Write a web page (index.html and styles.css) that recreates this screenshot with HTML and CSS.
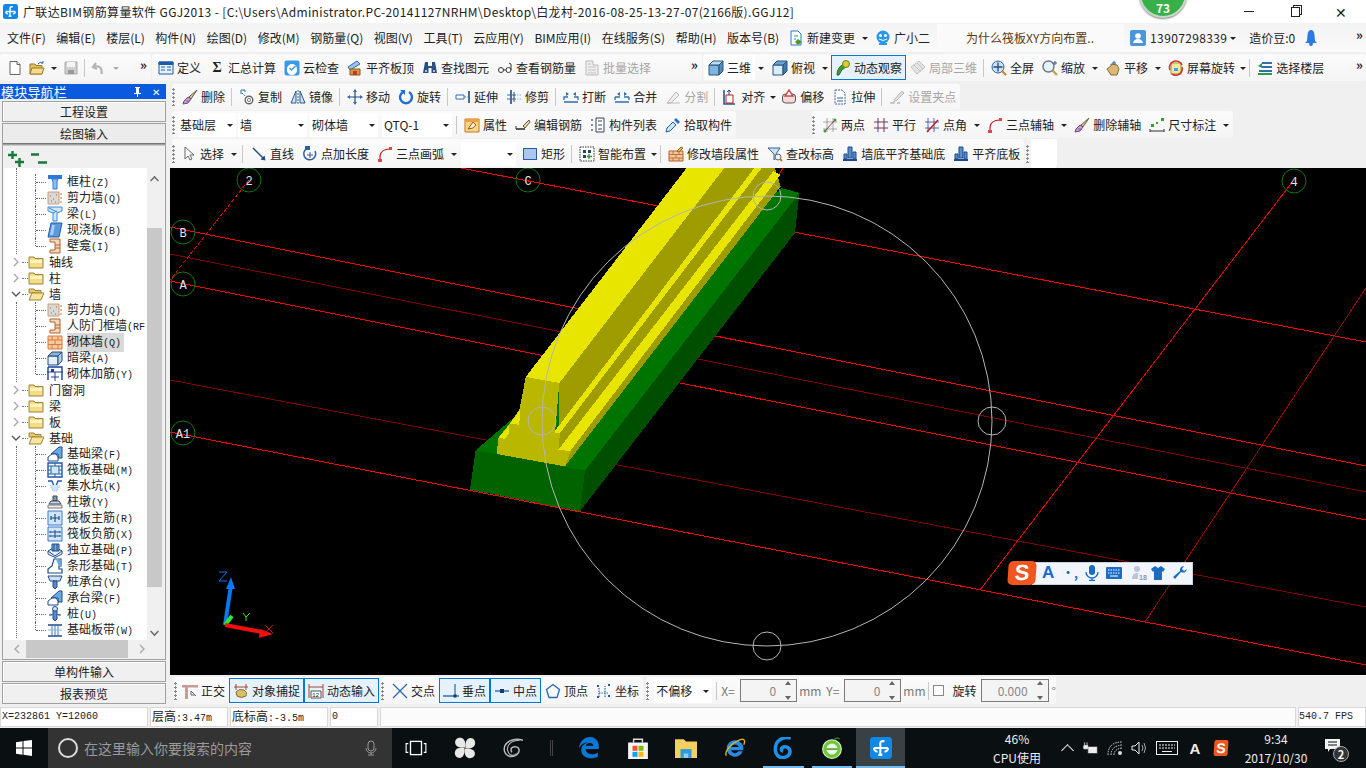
FILE: index.html
```html
<!DOCTYPE html>
<html lang="zh">
<head>
<meta charset="utf-8">
<title>GGJ2013</title>
<link rel="stylesheet" href="styles.css">
</head>
<body>
<svg class="sprite" aria-hidden="true">
<symbol id="app" viewBox="0 0 16 16"><rect width="16" height="16" rx="2.5" fill="#1188e6"/><path d="M10.500 3H9a1.500 1.500 0 0 0-1.500 1.500V13M3 8h10M3 8a2.200 2.200 0 0 0 2.500 2.500M13 8a2.200 2.200 0 0 1-2.500 2.500M6 13h3" fill="none" stroke="#fff" stroke-width="1.500"/></symbol>
<symbol id="file" viewBox="0 0 16 16"><path d="M3 1.500h7l3 3v10H3z" fill="#fff" stroke="#666"/><path d="M10 1.500v3h3" fill="#eee" stroke="#666"/></symbol>
<symbol id="open" viewBox="0 0 16 16"><path d="M1 4h5l1 1.500h6V14H1z" fill="#e2c060" stroke="#9a7a2a"/><path d="M3 8h12l-2 6H1z" fill="#f5dc8a" stroke="#9a7a2a"/><path d="M9 4q2-3 5-1M14 1v2h-2" fill="none" stroke="#2a6fc0"/></symbol>
<symbol id="save" viewBox="0 0 16 16"><path d="M2 2h12v12H2z" fill="#cfcfcf" stroke="#aaa"/><path d="M4 2h8v5H4z" fill="#f4f4f4"/><path d="M5 10h6v4H5z" fill="#999"/></symbol>
<symbol id="undo" viewBox="0 0 16 16"><path d="M5 3 2 7l4 2M2.500 7c5-2 9 0 8 7" fill="none" stroke="#b5b5b5" stroke-width="2.200"/></symbol>
<symbol id="def" viewBox="0 0 16 16"><path d="M1 2h14v12H1z" fill="#e8f0fa" stroke="#1d5aa8"/><path d="M1 2h14v2.500H1zM3 7h4M3 10h4M9 7h4M9 10h4" fill="#1d5aa8" stroke="#1d5aa8"/></symbol>
<symbol id="cloud" viewBox="0 0 16 16"><rect x=".5" y=".5" width="15" height="15" rx="2" fill="#3a9ae8"/><path d="M3 9a5 5 0 1 1 10 0 5 5 0 0 1-10 2z" fill="#fff"/><path d="m5.500 8 2 2 4-4" fill="none" stroke="#3a9ae8" stroke-width="1.500"/></symbol>
<symbol id="house" viewBox="0 0 16 16"><path d="M1 7 10 1l3 3-10 6z" fill="#9fc4e8" stroke="#2a68b0"/><path d="M3 9h10v6H3z" fill="#d69a3a" stroke="#8a5a1a"/><path d="M6 11h4v4H6z" fill="#c0392b"/></symbol>
<symbol id="bino" viewBox="0 0 16 16"><path d="M3 2h3v4h4V2h3l2 11H9.500V8h-3v5H1z" fill="#2c4f80"/><path d="M3 10h2v2H3zM11 10h2v2h-2z" fill="#9fc4e8"/></symbol>
<symbol id="glass" viewBox="0 0 16 16"><circle cx="4" cy="10" r="2.500" fill="#fff" stroke="#333"/><circle cx="11.500" cy="10" r="2.500" fill="#fff" stroke="#333"/><path d="M6.500 10h2.500M14 10V4l-2-1" fill="none" stroke="#333"/></symbol>
<symbol id="batch" viewBox="0 0 16 16"><path d="M2 1h7v4h5v10H2z" fill="#eee" stroke="#bbb"/><path d="M4 4h3M4 7h8M4 10h8M4 13h8" stroke="#c4c4c4"/></symbol>
<symbol id="cube" viewBox="0 0 16 16"><path d="M1 5h10v10H1z" fill="#7fb4dd" stroke="#28557f"/><path d="m1 5 4-4h10l-4 4z" fill="#bcdcf2" stroke="#28557f"/><path d="m11 5 4-4v10l-4 4z" fill="#4d8cbe" stroke="#28557f"/></symbol>
<symbol id="cubet" viewBox="0 0 16 16"><path d="M1 5h10v10H1z" fill="#dcecf8" stroke="#28557f"/><path d="m1 5 4-4h10l-4 4z" fill="#6aa2d0" stroke="#28557f"/><path d="m11 5 4-4v10l-4 4z" fill="#3e79ad" stroke="#28557f"/></symbol>
<symbol id="orbit" viewBox="0 0 16 16"><path d="M2 15q0-8 7-11l2 3q-5 2-7 8z" fill="#3f9a3a" stroke="#256b22"/><circle cx="11" cy="4" r="3.500" fill="#d8d030" stroke="#7d7a14"/></symbol>
<symbol id="lo3d" viewBox="0 0 16 16"><path d="M1 7 9 1l6 6-8 7z" fill="#e5e5e5" stroke="#c0c0c0"/><path d="m4 5 7 7M7 3l6 6" stroke="#c4c4c4"/></symbol>
<symbol id="full" viewBox="0 0 16 16"><circle cx="7" cy="7" r="6" fill="#cfe2f5" stroke="#345f96"/><path d="M7 2.500v9M2.500 7h9" stroke="#234a7c" stroke-width="1.300"/><path d="m11 11 4 4" stroke="#c48a22" stroke-width="2.200"/></symbol>
<symbol id="zoomi" viewBox="0 0 16 16"><circle cx="6.500" cy="6.500" r="5.500" fill="#e8f0f8" stroke="#66788e" stroke-width="1.400"/><path d="m10.500 10.500 4.500 4.500" stroke="#c4a050" stroke-width="2.400"/><path d="M13 1v4M11 3h4" stroke="#345f96"/></symbol>
<symbol id="hand" viewBox="0 0 16 16"><path d="M2 9 6 6V4l6 1 2 4-2 6H6z" fill="#d9b878" stroke="#8a6a30"/><path d="M9 1v4M7 3h4" stroke="#345f96"/></symbol>
<symbol id="rot" viewBox="0 0 16 16"><rect x="3" y="3" width="10" height="11" fill="#f0e8a0" stroke="#8aa040"/><path d="M2 10A6.500 6.500 0 0 1 14 5" fill="none" stroke="#d03a2a" stroke-width="1.600"/><path d="M14 7a6.500 6.500 0 0 1-10 7" fill="none" stroke="#d03a2a" stroke-width="1.600"/><path d="M6 8h4v3H6z" fill="#4a9adf"/></symbol>
<symbol id="layer" viewBox="0 0 16 16"><path d="M5 2h10v2H5zM5 6h10v2H5z" fill="#2f6fb0"/><path d="M2 10h13v2H2z" fill="#2f6fb0"/><path d="M1 13h14v2H1z" fill="#2e9a44"/><path d="M5 3 1 6l4 2z" fill="#2e9a44"/></symbol>
<symbol id="brush" viewBox="0 0 16 16"><path d="M15 1 7 8l2 2z" fill="#d8c8a0" stroke="#6a5a3a"/><path d="M6 8 2 12l-1 3 5-1 3-4z" fill="#cfa0c8" stroke="#6a4a70"/><path d="M4 12h4" stroke="#7a5acc"/></symbol>
<symbol id="copy" viewBox="0 0 16 16"><circle cx="10" cy="11" r="3.800" fill="none" stroke="#666" stroke-width="1.400"/><circle cx="10" cy="11" r="1.600" fill="none" stroke="#888"/><path d="M2 1h4v2M2 1v4" fill="none" stroke="#2f6fb0"/><path d="m3 4 3 3" stroke="#2f6fb0" stroke-dasharray="1.500 1"/></symbol>
<symbol id="mirror" viewBox="0 0 16 16"><path d="M1 14 6 2v12zM15 14 10 2v12z" fill="#cfe0f0" stroke="#2a5a8a"/><path d="M8 1v14" stroke="#2a5a8a" stroke-dasharray="2 1"/></symbol>
<symbol id="move" viewBox="0 0 16 16"><path d="M8 1v14M1 8h14" stroke="#234a7c" stroke-width="1.200"/><path d="M8 0 6 3h4zM8 16l-2-3h4zM0 8l3-2v4zM16 8l-3-2v4z" fill="#2f6fb0"/></symbol>
<symbol id="rotate" viewBox="0 0 16 16"><path d="M11 3a6 6 0 1 1-6 0" fill="none" stroke="#1f6fd0" stroke-width="2.400"/><path d="M2 1h5v5z" fill="#1f6fd0"/></symbol>
<symbol id="extend" viewBox="0 0 16 16"><path d="M1 6h8v4H1z" fill="#fff" stroke="#2f6fb0"/><path d="M9.500 8h3" stroke="#2f6fb0" stroke-dasharray="1.500 1"/><path d="M14 2v12" stroke="#234a7c" stroke-width="1.600"/></symbol>
<symbol id="trim" viewBox="0 0 16 16"><path d="M5 1v14" stroke="#234a7c" stroke-width="1.600"/><path d="M1 6h9M1 10h9" stroke="#2f6fb0"/><path d="M11 6h4M11 10h4" stroke="#8db4dc" stroke-dasharray="1.500 1"/><path d="M8 3v10" stroke="#234a7c"/></symbol>
<symbol id="brk" viewBox="0 0 16 16"><path d="M1 11V8h4M15 11V8h-4M1 13h14" fill="none" stroke="#2f6fb0" stroke-width="1.300"/><path d="m3 3 3 2-3 2zM13 3l-3 2 3 2z" fill="#2f6fb0"/></symbol>
<symbol id="merge" viewBox="0 0 16 16"><path d="M1 8h5M10 8h5M1 13h14M1 11V8M15 11V8" fill="none" stroke="#2f6fb0" stroke-width="1.300"/><path d="m6 3-3 2 3 2zM10 3l3 2-3 2z" fill="#2f6fb0"/></symbol>
<symbol id="split" viewBox="0 0 16 16"><path d="m2 14 9-11 3 3-8 8z" fill="#eee" stroke="#bbb"/><path d="M2 14h13" stroke="#bbb"/></symbol>
<symbol id="align" viewBox="0 0 16 16"><path d="M2 1v14h11" fill="none" stroke="#2a5a8a" stroke-width="1.600"/><path d="M4 6h7v8H4z" fill="#fff" stroke="#c01a1a"/><path d="M7 1v5M5 3l2-2 2 2" fill="none" stroke="#234a7c"/></symbol>
<symbol id="offset" viewBox="0 0 16 16"><rect x="1.500" y="5" width="13" height="9" rx="3" fill="#f6d8d8" stroke="#555"/><path d="m8 1 4 6H4z" fill="#fff" stroke="#c94a4a" stroke-width="1.400"/></symbol>
<symbol id="stretch" viewBox="0 0 16 16"><path d="M3 1h7l3 3v11H3z" fill="#fff" stroke="#345f96" stroke-dasharray="2 1"/><path d="M5 9h6M5 12h6" stroke="#345f96"/></symbol>
<symbol id="gripset" viewBox="0 0 16 16"><path d="m5 11 8-9 2 2-8 8z" fill="#ddd" stroke="#bbb"/><path d="M1 14h4v-2M8 14h3" stroke="#bbb" fill="none" stroke-width="1.500"/></symbol>
<symbol id="prop" viewBox="0 0 16 16"><path d="M1 2h14v13H1z" fill="#f6d58c" stroke="#c07a20"/><path d="M4 12 9 5l3 3-3 3z" fill="#fff3d0" stroke="#a05a10"/><path d="M1 2h14v3H1z" fill="#f0a040"/></symbol>
<symbol id="rebar" viewBox="0 0 16 16"><path d="M1 12h9" stroke="#333" stroke-width="1.600"/><path d="M1 9v3" stroke="#333"/><path d="m8 9 6-6 1 2-5 6z" fill="#e8d8a0" stroke="#6a5a3a"/></symbol>
<symbol id="list" viewBox="0 0 16 16"><path d="M6 1h8v14H6z" fill="#fff" stroke="#345"/><path d="M8 4h4M8 8h4M8 12h4" stroke="#345"/><path d="M1 2h2v2H1zM1 7h2v2H1zM1 12h2v2H1z" fill="#888"/></symbol>
<symbol id="pick" viewBox="0 0 16 16"><path d="m1 15 1-4 6-6 3 3-6 6z" fill="#cfe6f8" stroke="#2060a0"/><path d="m9 3 2-2 4 4-2 2z" fill="#1f6fd0"/></symbol>
<symbol id="twop" viewBox="0 0 16 16"><path d="M1 5h14M1 12h14M5 1v14M11 1v14" stroke="#888" stroke-width=".7"/><path d="m2 15 12-13" stroke="#a03030"/><circle cx="13" cy="3" r="1.500" fill="#3a9a3a"/><circle cx="3" cy="14" r="1.500" fill="#3a9a3a"/></symbol>
<symbol id="para" viewBox="0 0 16 16"><path d="M1 5h14M1 11h14" stroke="#c01a1a"/><path d="M5 1v14M11 1v14" stroke="#2a4a9a"/></symbol>
<symbol id="angle" viewBox="0 0 16 16"><path d="M1 5h14M1 11h14M4 1v14M10 1v14" stroke="#2a4a9a" stroke-width=".8"/><path d="m3 15 11-12" stroke="#c01a1a" stroke-width="1.400"/></symbol>
<symbol id="arc3" viewBox="0 0 16 16"><path d="M3 15V10Q4 3 13 3" fill="none" stroke="#c01a1a" stroke-width="1.200"/><path d="M1 13h4v3H1zM12 1h3v3h-3z" fill="#d84a4a"/></symbol>
<symbol id="dimn" viewBox="0 0 16 16"><path d="M1 12v3M15 12v3M1 14h14" stroke="#333"/><path d="M2 7h3v3H2zM12 1h3v3h-3zM7 5h2v2H7z" fill="#3a9a3a"/></symbol>
<symbol id="cursor" viewBox="0 0 16 16"><path d="M4 1v12l3-3 2 4 2-1-2-4h4z" fill="#fff" stroke="#666"/></symbol>
<symbol id="line" viewBox="0 0 16 16"><path d="m2 2 11 11" stroke="#234a7c" stroke-width="1.400"/><path d="m14.500 14.500-1-5-4 4z" fill="#234a7c"/></symbol>
<symbol id="plen" viewBox="0 0 16 16"><path d="M5 2.500A6 6 0 1 0 13 5" fill="none" stroke="#345f96" stroke-width="1.500"/><path d="M8 6v6M5 9h6" stroke="#345f96"/><path d="M3 0h5v4H3z" fill="#345f96"/></symbol>
<symbol id="rect" viewBox="0 0 16 16"><rect x="1.500" y="2.500" width="13" height="11" fill="#aac8ee" stroke="#2a5aa8"/></symbol>
<symbol id="smart" viewBox="0 0 16 16"><path d="M1 1h14v14H1z" fill="#fff" stroke="#333" stroke-dasharray="1.500 1"/><path d="M4 4h3v3H4zM9 4h3v3H9zM4 9h3v3H4z" fill="#246"/><path d="M10 8v5M8 10.500h5" stroke="#2e9a44" stroke-width="1.400"/></symbol>
<symbol id="brick" viewBox="0 0 16 16"><path d="M1 5h14v10H1z" fill="#f2c69a" stroke="#b8602a"/><path d="M1 8.500h14M1 12h14M5 5v3.500M11 5v3.500M8 8.500V12M5 12v3M11 12v3" stroke="#b8602a" stroke-width=".8"/><path d="m9 5 4-4 2 1-4 4z" fill="#e0c060" stroke="#8a6a20"/></symbol>
<symbol id="elev" viewBox="0 0 16 16"><path d="M1 2h12L9 8v4l-2 2V8z" fill="#cfe0f0" stroke="#345f96"/><circle cx="11" cy="11" r="3" fill="#e8f0f8" stroke="#666"/><path d="m13 13 2 2" stroke="#c47a22" stroke-width="2"/></symbol>
<symbol id="walign" viewBox="0 0 16 16"><path d="M6 1h4v11H6zM2 8h3v5H2zM11 6h3v7h-3z" fill="#5a8ec8" stroke="#1d4a8a"/><path d="M1 14h14" stroke="#1d4a8a" stroke-width="2"/></symbol>
<symbol id="ortho" viewBox="0 0 16 16"><path d="M0 2h16v2.500H0zM3 4h3v12H3z" fill="#c89a9a"/><path d="m9 8 5 5M9 8v4h4" stroke="#667" fill="#fff"/></symbol>
<symbol id="snap" viewBox="0 0 16 16"><path d="M3 1v6M13 1v6M1 4h14" stroke="#a04a30"/><path d="M3 9q3-4 8-2 4 2 2 6-5 3-9 0z" fill="#d8c068" stroke="#8a7030"/></symbol>
<symbol id="cross" viewBox="0 0 16 16"><path d="m1 1 14 14M15 1 1 15" stroke="#2a68b0" stroke-width="1.300"/></symbol>
<symbol id="perp" viewBox="0 0 16 16"><path d="M12 1v13" stroke="#2a68b0" stroke-width="1.200"/><path d="M0 13h16" stroke="#2a68b0" stroke-width="1.400"/><rect x="10.500" y="11.500" width="3" height="3" fill="#123a7c"/></symbol>
<symbol id="mid" viewBox="0 0 16 16"><path d="M1 8h14" stroke="#2a68b0" stroke-width="1.400"/><rect x="6" y="6" width="4" height="4" fill="#123a7c"/></symbol>
<symbol id="penta" viewBox="0 0 16 16"><path d="m8 1.500 6.500 5-2.500 8H4l-2.500-8z" fill="none" stroke="#2a68b0" stroke-width="1.300"/></symbol>
<symbol id="coord" viewBox="0 0 16 16"><path d="M3 14V5M3 10h10M9 14V3" stroke="#2a68b0" stroke-dasharray="1.500 1" stroke-width="1.200"/><path d="M1 2h2v2H1zM12 1h2v2h-2zM1 13h2v2H1zM12 12h2v2h-2z" fill="#1d5aa8"/></symbol>
<symbol id="folder" viewBox="0 0 16 16"><path d="M1 3h5l1 1.500h8V14H1z" fill="#f6dc82" stroke="#9a8440"/><path d="M2 6h12v3H2z" fill="#fff3c0"/></symbol>
<symbol id="fopen" viewBox="0 0 16 16"><path d="M1 3h5l1 1.500h6V7H1z" fill="#e9c868" stroke="#9a8440"/><path d="M4 7h12l-3 7H1z" fill="#fbe39a" stroke="#9a8440"/></symbol>
<symbol id="t-col" viewBox="0 0 16 16"><path d="M1 1h14v4H1z" fill="#2f7ad8"/><path d="M5 5h6l-1 3v7H6V8z" fill="#8cc0ee" stroke="#2f7ad8"/></symbol>
<symbol id="t-wall" viewBox="0 0 16 16"><path d="M1 2h11v12H1z" fill="#d8d8d8" stroke="#d09a70"/><path d="M3 6h1M6 9h1M9 5h1M4 11h1M8 12h1" stroke="#777"/><path d="M13 4h2M13 8h2M13 12h2" stroke="#d06a1a"/></symbol>
<symbol id="t-beam" viewBox="0 0 16 16"><path d="M1 1h14v4l-5 2v8H6V7L1 5z" fill="#cfe6f8" stroke="#3a8ad8"/><path d="m2 2 8 4M6 7l4-2" stroke="#3a8ad8"/></symbol>
<symbol id="t-slab" viewBox="0 0 16 16"><path d="M4 1h11l-3 14H1z" fill="#5a9ae0" stroke="#1d5aa8"/><path d="m5 3-2 10h3l2-10z" fill="#a8d0f4"/></symbol>
<symbol id="t-niche" viewBox="0 0 16 16"><path d="M3 1h10v14H3v-3h5V4H3z" fill="#f2d8c0" stroke="#b8602a"/><path d="M8 7h5M8 10h5" stroke="#b8602a"/></symbol>
<symbol id="t-brick" viewBox="0 0 16 16"><path d="M1 2h14v13H1z" fill="#f4c8a0" stroke="#d87a3a"/><path d="M1 6h14M1 10.500h14M5 2v4M11 2v4M8 6v4.500M5 10.500V15M11 10.500V15" stroke="#d87a3a"/></symbol>
<symbol id="t-dark" viewBox="0 0 16 16"><path d="M1 6h10v9H1z" fill="#e6eef6" stroke="#234a7c"/><path d="m1 6 4-4h10l-4 4z" fill="#8cb4dc" stroke="#234a7c"/><path d="m11 6 4-4v9l-4 4z" fill="#b4d0ec" stroke="#234a7c"/></symbol>
<symbol id="t-reb" viewBox="0 0 16 16"><path d="M1 1h14v13M1 1v13" fill="none" stroke="#1d3f9a" stroke-width="1.400"/><path d="M0 6h16M8 6v9M4 11h8" stroke="#1d3f9a"/><path d="M4 3h3v3H4z" fill="#1d3f9a"/></symbol>
<symbol id="t-fb" viewBox="0 0 16 16"><path d="m4 8 8-7h3v11h-4V8z" fill="#6aa8e4" stroke="#1d4a8a"/><path d="M1 15V11l4-3h4l2 3v4z" fill="#fff" stroke="#1d4a8a"/></symbol>
<symbol id="t-raft" viewBox="0 0 16 16"><path d="M1 1h14v14H1z" fill="#fff" stroke="#1d5aa8" stroke-width="1.400"/><path d="M4 4h8v8H4z" fill="#cfe6f8" stroke="#1d5aa8"/><path d="M1 4h3M1 8h3M1 12h3M12 4h3M12 8h3M12 12h3M8 1v3M8 12v3" stroke="#1d5aa8"/></symbol>
<symbol id="t-pit" viewBox="0 0 16 16"><path d="M1 3h4l2 5h2l2-5h4" fill="none" stroke="#1d5aa8" stroke-width="1.400"/><path d="m3 7 3 6h4l3-6" fill="#cfe6f8" stroke="#8cb4dc" stroke-dasharray="1 1"/></symbol>
<symbol id="t-pier" viewBox="0 0 16 16"><path d="M6 2h4v5H6z" fill="#7a9ac0" stroke="#345"/><path d="m4 7h8l2 3H2z" fill="#cfd8e4" stroke="#345"/><path d="M1 11h14v3H1z" fill="#eee" stroke="#777"/></symbol>
<symbol id="t-rm" viewBox="0 0 16 16"><path d="M1 1h14v14H1z" fill="#cfe6f8" stroke="#3a78c8"/><path d="M8 4v8M4 8h8M4 6v4M12 6v4" stroke="#1d4a8a" stroke-width="1.200"/></symbol>
<symbol id="t-rn" viewBox="0 0 16 16"><path d="M1 1h14v14H1z" fill="#cfe6f8" stroke="#3a78c8"/><path d="M3 6h10M3 10h10M8 4v8M3 5v2M13 5v2M3 9v2M13 9v2" stroke="#1d4a8a"/></symbol>
<symbol id="t-iso" viewBox="0 0 16 16"><path d="m1 9 7-4 7 4-7 5z" fill="#e8f0f8" stroke="#1d4a8a"/><path d="M1 9v3l7 3.500L15 12V9" fill="none" stroke="#1d4a8a"/><path d="M5 2h7v7H5z" fill="#7aa8dc" stroke="#1d4a8a"/><path d="M7 2v7M10 2v7" stroke="#1d4a8a"/></symbol>
<symbol id="t-strip" viewBox="0 0 16 16"><path d="M7 1h7v7h-2v3h3v4H1v-4l4-3z" fill="#fff" stroke="#1d4a8a" stroke-width="1.200"/><path d="m9 1 5 1v6h-2L10 4z" fill="#6aa8e4"/></symbol>
<symbol id="t-cap" viewBox="0 0 16 16"><path d="M1 2h14l-2 5H3z" fill="#cfe0f0" stroke="#1d4a8a"/><path d="M6 7h4v6l-2 2-2-2z" fill="#5a8ec8" stroke="#1d4a8a"/></symbol>
<symbol id="t-pile" viewBox="0 0 16 16"><circle cx="8" cy="3" r="2.500" fill="#cfe6f8" stroke="#1d4a8a"/><path d="M6 5h4v8l-2 2-2-2zM2 9h3v-1M14 9h-3v-1" fill="#5a8ec8" stroke="#1d4a8a"/></symbol>
<symbol id="t-band" viewBox="0 0 16 16"><path d="M1 3h14M1 14h14" stroke="#1d4a8a" stroke-width="1.300"/><path d="M5 3v11M8 3v11M11 3v11" stroke="#3a78c8"/><path d="M1 8h14" stroke="#8cb4dc"/></symbol>
<symbol id="plus" viewBox="0 0 16 16"><path d="M0 4h9M4.500 0v8M7 11h9M11.500 7v9" stroke="#157a3c" stroke-width="2.400"/></symbol>
<symbol id="minus" viewBox="0 0 16 16"><path d="M0 3.500h8M7 11.500h9" stroke="#157a3c" stroke-width="2.400"/></symbol>
<symbol id="chev" viewBox="0 0 10 10"><path d="m3 1 4 4-4 4" fill="none" stroke="#a8a8a8" stroke-width="1.400"/></symbol>
<symbol id="chevd" viewBox="0 0 10 10"><path d="m1 3 4 4 4-4" fill="none" stroke="#555" stroke-width="1.400"/></symbol>
<symbol id="pin" viewBox="0 0 10 10"><path d="M3 0h5v1H7v5h2v1H6v3H5V7H2V6h2V1H3z" fill="#fff"/></symbol>
<symbol id="change" viewBox="0 0 16 16"><path d="M3 1h7l3 3v11H3z" fill="#fff" stroke="#2a7ac8"/><path d="M6 6h4M6 9h2" stroke="#2a7ac8"/><path d="m10 9 4 3-4 3-3-3z" fill="#4a9a2a"/></symbol>
<symbol id="robot" viewBox="0 0 16 16"><circle cx="8" cy="7" r="6.500" fill="#2a98ea"/><circle cx="5.500" cy="5.500" r="1.500" fill="#fff"/><circle cx="10.500" cy="5.500" r="1.500" fill="#fff"/><path d="M4 9q4 3 8 0" fill="none" stroke="#fff"/><path d="M4 13h8v2H4z" fill="#2a98ea"/></symbol>
<symbol id="user" viewBox="0 0 16 16"><rect width="16" height="16" rx="2" fill="#4a96dc"/><circle cx="8" cy="6" r="2.800" fill="#fff"/><path d="M3 13q1-4 5-4t5 4z" fill="#fff"/></symbol>
<symbol id="bell" viewBox="0 0 16 16"><path d="M8 0q3 0 3.500 5l.5 6 2 2H2l2-2 .5-6Q5 0 8 0z" fill="#2a7ae0"/><circle cx="8" cy="14" r="2" fill="#2a7ae0"/></symbol>
<symbol id="win" viewBox="0 0 16 16"><path d="m0 2.300 6.500-1v6.200H0zM7.500 1.100 16 0v7.500H7.500zM0 8.500h6.500v6.200l-6.500-1zM7.500 8.500H16V16l-8.500-1.200z" fill="#fff"/></symbol>
<symbol id="mic" viewBox="0 0 16 16"><rect x="5" y="1" width="6" height="10" rx="3" fill="none" stroke="#999"/><path d="M3 8a5 5 0 0 0 10 0M8 13v2M5 15h6" fill="none" stroke="#999"/></symbol>
<symbol id="tview" viewBox="0 0 20 16"><rect x="5" y="2" width="10" height="12" fill="none" stroke="#fff" stroke-width="1.200"/><path d="M3 4H1v8h2M17 4h2v8h-2" fill="none" stroke="#fff"/></symbol>
<symbol id="fan" viewBox="0 0 20 20"><g fill="#e8e8e8"><path id="petal" d="M10 9.500C6 10 1 9 1 5c0-3 3-5 6-4 3 1 4 5 3 8.500z"/><path d="M10.500 10C10 6 11 1 15 1c3 0 5 3 4 6-1 3-5 4-8.500 3z"/><path d="M10 10.500c4-.5 9 .5 9 4.500 0 3-3 5-6 4-3-1-4-5-3-8.500z"/><path d="M9.500 10c.5 4-.5 9-4.500 9-3 0-5-3-4-6 1-3 5-4 8.500-3z"/></g></symbol>
<symbol id="swirl" viewBox="0 0 20 20"><path d="M19 3C10 0 2 5 2 11s6 8 10 6 5-7 1-8-6 2-4 5" fill="none" stroke="#bbb" stroke-width="1.300"/><path d="M16 3C9 3 4 7 5 12s6 6 8 3" fill="none" stroke="#bbb"/></symbol>
<symbol id="edge" viewBox="0 0 20 20"><path d="M1 11C1 4 6 0 11 0c5 0 8 4 8 9v2H7c0 5 7 6 11 3v4c-6 3-15 1-15-6 0-4 3-6 6-7-4 0-7 2-8 6z" fill="#0a78d7"/><path d="M7 8h7c0-3-6-4-7 0z" fill="#0a0f12"/></symbol>
<symbol id="store" viewBox="0 0 20 20"><path d="M1 5h18v15H1z" fill="#f4f4f4"/><path d="M6 5V2h8v3" fill="none" stroke="#ddd" stroke-width="1.300"/><path d="M5 8h4.500v4.500H5z" fill="#f25022"/><path d="M10.500 8H15v4.500h-4.500z" fill="#7fba00"/><path d="M5 13.500h4.500V18H5z" fill="#00a4ef"/><path d="M10.500 13.500H15V18h-4.500z" fill="#ffb900"/></symbol>
<symbol id="expl" viewBox="0 0 20 20"><path d="M0 2h8l2 2h10v15H0z" fill="#f4cf5e"/><path d="M5 11h10v8H5z" fill="#2f9ae0"/><path d="M8 15h4v4H8z" fill="#8fd0f4"/></symbol>
<symbol id="ie" viewBox="0 0 20 20"><path d="M10 3a7.500 7.500 0 1 0 7 10h-4a3.500 3.500 0 0 1-6.500-1H17.500A7.500 7.500 0 0 0 10 3zM6.500 9c.5-3 6-3 7 0z" fill="#2a8ae0"/><path d="M2 17C0 12 10 3 17 2c2 0 2 3 1 5" fill="none" stroke="#e8b820" stroke-width="1.200"/></symbol>
<symbol id="gapp" viewBox="0 0 20 20"><path d="M17 1c-8-2-14 3-14 10s6 9 10 7 5-7 0-9c-4-1-6 3-3 4" fill="none" stroke="#1f90e8" stroke-width="3.200"/></symbol>
<symbol id="green" viewBox="0 0 20 20"><circle cx="10" cy="11" r="8.500" fill="#6cc83a" stroke="#d8f0c8"/><circle cx="10" cy="11" r="5" fill="#eef8e0"/><path d="M5 11h10" stroke="#4a9a2a" stroke-width="1.400"/><path d="M12 2q3-2 5 0" fill="none" stroke="#3a8a1a"/></symbol>
<symbol id="plug" viewBox="0 0 20 16"><path d="M6 6h12v9H6z" fill="#eee" stroke="#222"/><path d="M2 1v4M5 1v4M1 5h5v4H1z" stroke="#eee" fill="#eee"/></symbol>
<symbol id="wifi" viewBox="0 0 16 16"><path d="M1 15q0-13 14-13M4 15q0-9 11-10M7 15q0-6 8-7" fill="none" stroke="#ddd" stroke-dasharray="1.500 1"/><circle cx="13" cy="13" r="2" fill="#ddd"/></symbol>
<symbol id="sound" viewBox="0 0 16 16"><path d="M1 6h3l4-4v12l-4-4H1z" fill="none" stroke="#eee"/><path d="M11 5q2 3 0 6M13 3q3 5 0 10" fill="none" stroke="#aaa"/></symbol>
<symbol id="kbd" viewBox="0 0 22 16"><rect x=".5" y="1.500" width="21" height="13" fill="none" stroke="#eee"/><path d="M3 5h16M3 8h16" stroke="#eee" stroke-dasharray="2 1"/><path d="M6 11.500h10" stroke="#eee"/></symbol>
<symbol id="msg" viewBox="0 0 16 16"><path d="M0 1h15v10H5l-2 3v-3H0z" fill="#f4f4f4"/><path d="M3 4h9M3 7h9" stroke="#0a0f12"/></symbol>
<symbol id="shirt" viewBox="0 0 16 16"><path d="M5 1 1 4l2 3 1-1v9h8V6l1 1 2-3-4-3-3 2z" fill="#1a6cc4"/></symbol>
<symbol id="wrench" viewBox="0 0 16 16"><path d="M15 4a4 4 0 0 1-6 3l-6 7-2-2 7-6a4 4 0 0 1 4-5l-2 3 2 2z" fill="#1a6cc4"/></symbol>
<symbol id="smic" viewBox="0 0 16 16"><rect x="5" y="0" width="6" height="10" rx="3" fill="#1a6cc4"/><path d="M2 7a6 6 0 0 0 12 0M8 13v2M5 15.500h6" fill="none" stroke="#1a6cc4" stroke-width="1.300"/></symbol>
<symbol id="skbd" viewBox="0 0 16 16"><rect y="2" width="16" height="12" rx="1" fill="#1a6cc4"/><path d="M2 5h12M2 8h12" stroke="#fff" stroke-dasharray="1.500 1"/><path d="M4 11h8" stroke="#fff"/></symbol>
<symbol id="sperson" viewBox="0 0 16 16"><circle cx="6" cy="4" r="3" fill="#bcc6d4"/><path d="M1 14q0-6 5-6t5 6z" fill="#bcc6d4"/></symbol>
</svg>

<header class="titlebar">
  <svg class="appicon"><use href="#app"/></svg>
  <span class="title">广联达BIM钢筋算量软件 GGJ2013 - [C:\Users\Administrator.PC-20141127NRHM\Desktop\白龙村-2016-08-25-13-27-07(2166版).GGJ12]</span>
  <div class="winbtns">
    <span class="wb"><i class="w-min"></i></span>
    <span class="wb"><i class="w-max"></i></span>
    <span class="wb"><i class="w-close">✕</i></span>
  </div>
</header>
<div class="badge"><span>73</span></div>

<nav class="menubar">
  <div class="menus">
    <span>文件(F)</span><span>编辑(E)</span><span>楼层(L)</span><span>构件(N)</span><span>绘图(D)</span><span>修改(M)</span><span>钢筋量(Q)</span><span>视图(V)</span><span>工具(T)</span><span>云应用(Y)</span><span>BIM应用(I)</span><span>在线服务(S)</span><span>帮助(H)</span><span>版本号(B)</span>
  </div>
  <div class="it ml5"><svg class="ic"><use href="#change"/></svg><span>新建变更</span></div><i class="arr"></i>
  <div class="it"><svg class="ic"><use href="#robot"/></svg><span>广小二</span></div>
  <div class="news">为什么筏板XY方向布置..</div>
  <div class="userbox">
    <svg class="ic"><use href="#user"/></svg><span class="phone">13907298339</span><i class="arr"></i>
    <span class="beans">造价豆:0</span><svg class="ic bell"><use href="#bell"/></svg><b class="more mr">»</b>
  </div>
</nav>

<div class="row rowtop">
  <div class="blk b-file">
    <span class="ib"><svg class="ic"><use href="#file"/></svg></span>
    <span class="ib"><svg class="ic"><use href="#open"/></svg></span><i class="arr"></i>
    <span class="ib"><svg class="ic"><use href="#save"/></svg></span><i class="sep"></i>
    <span class="ib"><svg class="ic"><use href="#undo"/></svg></span><i class="arr dim"></i>
    <b class="more">»</b>
  </div>
  <div class="blk b-calc">
    <div class="it"><svg class="ic"><use href="#def"/></svg><span>定义</span></div>
    <div class="it"><b class="sigma">Σ</b><span>汇总计算</span></div>
    <div class="it"><svg class="ic"><use href="#cloud"/></svg><span>云检查</span></div>
    <div class="it"><svg class="ic"><use href="#house"/></svg><span>平齐板顶</span></div>
    <div class="it"><svg class="ic"><use href="#bino"/></svg><span>查找图元</span></div>
    <div class="it"><svg class="ic"><use href="#glass"/></svg><span>查看钢筋量</span></div>
    <div class="it off"><svg class="ic"><use href="#batch"/></svg><span>批量选择</span></div>
    <b class="more">»</b>
  </div>
  <div class="blk b-view">
    <div class="it wh"><svg class="ic"><use href="#cube"/></svg><span>三维</span></div><i class="arr a13"></i>
    <div class="it"><svg class="ic"><use href="#cubet"/></svg><span>俯视</span></div><i class="arr"></i>
    <div class="it act"><svg class="ic"><use href="#orbit"/></svg><span>动态观察</span></div>
    <div class="it off"><svg class="ic"><use href="#lo3d"/></svg><span>局部三维</span></div><i class="sep"></i>
    <div class="it"><svg class="ic"><use href="#full"/></svg><span>全屏</span></div>
    <div class="it"><svg class="ic"><use href="#zoomi"/></svg><span>缩放</span></div><i class="arr"></i>
    <div class="it"><svg class="ic"><use href="#hand"/></svg><span>平移</span></div><i class="arr"></i>
    <div class="it"><svg class="ic"><use href="#rot"/></svg><span>屏幕旋转</span></div><i class="arr a8"></i><i class="sep"></i>
    <div class="it"><svg class="ic"><use href="#layer"/></svg><span>选择楼层</span></div>
    <b class="more mr">»</b>
  </div>
</div>

<main class="work">
  <aside class="nav">
    <div class="navhead"><span>模块导航栏</span><svg class="pin"><use href="#pin"/></svg><span class="navx">✕</span></div>
    <button class="navbtn">工程设置</button>
    <button class="navbtn on">绘图输入</button>
    <div class="panel">
      <div class="strip"><svg class="ic"><use href="#plus"/></svg><svg class="ic wide"><use href="#minus"/></svg></div>
      <div class="treewrap">
        <div class="tree">
          <div class="group first">
            <div class="leaf"><svg class="ic"><use href="#t-col"/></svg><span>框柱<span class="m">(Z)</span></span></div>
            <div class="leaf"><svg class="ic"><use href="#t-wall"/></svg><span>剪力墙<span class="m">(Q)</span></span></div>
            <div class="leaf"><svg class="ic"><use href="#t-beam"/></svg><span>梁<span class="m">(L)</span></span></div>
            <div class="leaf"><svg class="ic"><use href="#t-slab"/></svg><span>现浇板<span class="m">(B)</span></span></div>
            <div class="leaf"><svg class="ic"><use href="#t-niche"/></svg><span>壁龛<span class="m">(I)</span></span></div>
          </div>
          <div class="node"><svg class="cv"><use href="#chev"/></svg><svg class="ic"><use href="#folder"/></svg><span>轴线</span></div>
          <div class="node"><svg class="cv"><use href="#chev"/></svg><svg class="ic"><use href="#folder"/></svg><span>柱</span></div>
          <div class="node"><svg class="cv"><use href="#chevd"/></svg><svg class="ic"><use href="#fopen"/></svg><span>墙</span></div>
          <div class="group">
            <div class="leaf"><svg class="ic"><use href="#t-wall"/></svg><span>剪力墙<span class="m">(Q)</span></span></div>
            <div class="leaf"><svg class="ic"><use href="#t-niche"/></svg><span>人防门框墙<span class="m">(RF</span></span></div>
            <div class="leaf sel"><svg class="ic"><use href="#t-brick"/></svg><span>砌体墙<span class="m">(Q)</span></span></div>
            <div class="leaf"><svg class="ic"><use href="#t-dark"/></svg><span>暗梁<span class="m">(A)</span></span></div>
            <div class="leaf"><svg class="ic"><use href="#t-reb"/></svg><span>砌体加筋<span class="m">(Y)</span></span></div>
          </div>
          <div class="node"><svg class="cv"><use href="#chev"/></svg><svg class="ic"><use href="#folder"/></svg><span>门窗洞</span></div>
          <div class="node"><svg class="cv"><use href="#chev"/></svg><svg class="ic"><use href="#folder"/></svg><span>梁</span></div>
          <div class="node"><svg class="cv"><use href="#chev"/></svg><svg class="ic"><use href="#folder"/></svg><span>板</span></div>
          <div class="node"><svg class="cv"><use href="#chevd"/></svg><svg class="ic"><use href="#fopen"/></svg><span>基础</span></div>
          <div class="group">
            <div class="leaf"><svg class="ic"><use href="#t-fb"/></svg><span>基础梁<span class="m">(F)</span></span></div>
            <div class="leaf"><svg class="ic"><use href="#t-raft"/></svg><span>筏板基础<span class="m">(M)</span></span></div>
            <div class="leaf"><svg class="ic"><use href="#t-pit"/></svg><span>集水坑<span class="m">(K)</span></span></div>
            <div class="leaf"><svg class="ic"><use href="#t-pier"/></svg><span>柱墩<span class="m">(Y)</span></span></div>
            <div class="leaf"><svg class="ic"><use href="#t-rm"/></svg><span>筏板主筋<span class="m">(R)</span></span></div>
            <div class="leaf"><svg class="ic"><use href="#t-rn"/></svg><span>筏板负筋<span class="m">(X)</span></span></div>
            <div class="leaf"><svg class="ic"><use href="#t-iso"/></svg><span>独立基础<span class="m">(P)</span></span></div>
            <div class="leaf"><svg class="ic"><use href="#t-strip"/></svg><span>条形基础<span class="m">(T)</span></span></div>
            <div class="leaf"><svg class="ic"><use href="#t-cap"/></svg><span>桩承台<span class="m">(V)</span></span></div>
            <div class="leaf"><svg class="ic"><use href="#t-fb"/></svg><span>承台梁<span class="m">(F)</span></span></div>
            <div class="leaf"><svg class="ic"><use href="#t-pile"/></svg><span>桩<span class="m">(U)</span></span></div>
            <div class="leaf"><svg class="ic"><use href="#t-band"/></svg><span>基础板带<span class="m">(W)</span></span></div>
          </div>
          <div class="node"><svg class="cv"><use href="#chev"/></svg><svg class="ic"><use href="#folder"/></svg></div>
        </div>
        <div class="vscroll"><i class="up"></i><div class="vthumb"></div><i class="down"></i></div>
      </div>
      <div class="hscroll"><svg class="cv"><use href="#chev"/></svg><div class="hthumb"></div><svg class="cv"><use href="#chev"/></svg></div>
    </div>
    <button class="navbtn low">单构件输入</button>
    <button class="navbtn low">报表预览</button>
  </aside>

  <section class="right">
    <div class="row r2 ra">
      <div class="blk">
        <i class="grip"></i>
        <div class="it"><svg class="ic"><use href="#brush"/></svg><span>删除</span></div><i class="sep"></i>
        <div class="it"><svg class="ic"><use href="#copy"/></svg><span>复制</span></div>
        <div class="it"><svg class="ic"><use href="#mirror"/></svg><span>镜像</span></div><i class="sep"></i>
        <div class="it"><svg class="ic"><use href="#move"/></svg><span>移动</span></div>
        <div class="it"><svg class="ic"><use href="#rotate"/></svg><span>旋转</span></div><i class="sep"></i>
        <div class="it"><svg class="ic"><use href="#extend"/></svg><span>延伸</span></div>
        <div class="it"><svg class="ic"><use href="#trim"/></svg><span>修剪</span></div><i class="sep"></i>
        <div class="it"><svg class="ic"><use href="#brk"/></svg><span>打断</span></div>
        <div class="it"><svg class="ic"><use href="#merge"/></svg><span>合并</span></div>
        <div class="it off"><svg class="ic"><use href="#split"/></svg><span>分割</span></div><i class="sep"></i>
        <div class="it"><svg class="ic"><use href="#align"/></svg><span>对齐</span></div><i class="arr a8"></i>
        <div class="it"><svg class="ic"><use href="#offset"/></svg><span>偏移</span></div>
        <div class="it"><svg class="ic"><use href="#stretch"/></svg><span>拉伸</span></div><i class="sep"></i>
        <div class="it off"><svg class="ic"><use href="#gripset"/></svg><span>设置夹点</span></div>
      </div>
    </div>
    <div class="row r2">
      <div class="blk">
        <i class="grip"></i>
        <div class="combo c58"><span>基础层</span><i class="arr"></i></div>
        <div class="combo c69"><span>墙</span><i class="arr"></i></div>
        <div class="combo c68"><span>砌体墙</span><i class="arr"></i></div>
        <div class="combo c70"><span>QTQ-1</span><i class="arr"></i></div><i class="sep"></i>
        <div class="it"><svg class="ic"><use href="#prop"/></svg><span>属性</span></div>
        <div class="it"><svg class="ic"><use href="#rebar"/></svg><span>编辑钢筋</span></div>
        <div class="it"><svg class="ic"><use href="#list"/></svg><span>构件列表</span></div>
        <div class="it"><svg class="ic"><use href="#pick"/></svg><span>拾取构件</span></div>
      </div>
      <div class="blk b-axis">
        <i class="grip"></i>
        <div class="it"><svg class="ic"><use href="#twop"/></svg><span>两点</span></div>
        <div class="it"><svg class="ic"><use href="#para"/></svg><span>平行</span></div>
        <div class="it"><svg class="ic"><use href="#angle"/></svg><span>点角</span></div><i class="arr"></i>
        <div class="it"><svg class="ic"><use href="#arc3"/></svg><span>三点辅轴</span></div><i class="arr"></i>
        <div class="it"><svg class="ic"><use href="#brush"/></svg><span>删除辅轴</span></div>
        <div class="it"><svg class="ic"><use href="#dimn"/></svg><span>尺寸标注</span></div><i class="arr"></i>
      </div>
    </div>
    <div class="row r2 r4">
      <div class="blk">
        <i class="grip g5"></i>
        <div class="it"><svg class="ic"><use href="#cursor"/></svg><span>选择</span></div><i class="arr"></i><i class="sep s7"></i>
        <div class="it"><svg class="ic"><use href="#line"/></svg><span>直线</span></div>
        <div class="it"><svg class="ic"><use href="#plen"/></svg><span>点加长度</span></div>
        <div class="it"><svg class="ic"><use href="#arc3"/></svg><span>三点画弧</span></div><i class="arr a13"></i>
        <div class="combo c55"><span></span><i class="arr"></i></div><i class="gap2"></i>
        <div class="it"><svg class="ic"><use href="#rect"/></svg><span>矩形</span></div><i class="sep"></i>
        <div class="it"><svg class="ic"><use href="#smart"/></svg><span>智能布置</span></div><i class="arr a8"></i><i class="sep"></i>
        <div class="it"><svg class="ic"><use href="#brick"/></svg><span>修改墙段属性</span></div>
        <div class="it"><svg class="ic"><use href="#elev"/></svg><span>查改标高</span></div>
        <div class="it"><svg class="ic"><use href="#walign"/></svg><span>墙底平齐基础底</span></div>
        <div class="it"><svg class="ic"><use href="#walign"/></svg><span>平齐底板</span></div>
      </div>
      <div class="blk b-tail"><i class="grip"></i></div>
    </div>

    <div class="canvas">
      <svg class="scene" viewBox="170 168 1196 507" xmlns="http://www.w3.org/2000/svg">
        <rect x="170" y="168" width="1196" height="507" fill="#000"/>
        <g class="ln">
          <path d="M440 164 1366 342M170 227 1366 466M170 281 1366 520M170 432 1366 665" stroke="#f00"/>
          <path d="M170 254 1366 492M170 380 1366 607" stroke="#800000"/>
          <path d="M1293 181 980 590" stroke="#e00000"/>
          <path d="M1366 288 1145 622" stroke="#a00000"/>
          <path d="M249 180 170 280" stroke="#e00000" stroke-dasharray="4 2"/>
          <path d="M783 168 778 176" stroke="#e00000"/>
        </g>
        <g class="beam" transform="translate(460 168) scale(.33333)">
          <path d="M47 847 965 60 1018 75 375 908z" fill="#007400"/>
          <path d="M47 847 375 908 360 1030 30 965z" fill="#006300"/>
          <path d="M375 908 1018 75 1005 195 360 1030z" fill="#004f00"/>
          <path d="M298 645 793 0 945 0 962 55 315 895 295 850z" fill="#9e9c00"/>
          <path d="M197 627 680 0 793 0 298 645z" fill="#e8e600"/>
          <path d="M280 795 883 0 905 0 300 795z" fill="#e8e600"/>
          <path d="M295 845 940 10 962 20 330 850z" fill="#e8e600"/>
          <path d="M197 627 298 645 285 795 300 795 295 845 332 850 315 895 110 858 115 810 145 772 178 725 190 665z" fill="#bab700"/>
          <path d="M115 810 148 772 148 795 135 812zM150 768 180 725 178 770z" fill="#e8e600"/>
        </g>
        <g class="guide">
          <circle cx="767" cy="421" r="225"/>
          <circle cx="767" cy="196" r="14"/><circle cx="542" cy="421" r="14"/><circle cx="992" cy="421" r="14"/><circle cx="767" cy="646" r="14"/>
        </g>
        <g class="bub">
          <circle cx="249" cy="180" r="12"/><circle cx="528" cy="180" r="12"/><circle cx="1294" cy="181" r="12"/>
          <circle cx="183" cy="232" r="12"/><circle cx="183" cy="284" r="12"/><circle cx="183" cy="433" r="12"/>
        </g>
        <g class="lbl">
          <text x="249" y="185">2</text><text x="528" y="185">C</text><text x="1294" y="186">4</text>
          <text x="183" y="237">B</text><text x="183" y="289">A</text><text x="183" y="438">A1</text>
        </g>
        <g class="gizmo">
          <path d="M225 625 231 585" stroke="#0a78f0" stroke-width="4"/><path d="m231 577-5 12h9z" fill="#0a78f0"/>
          <path d="m225 625 7-9" stroke="#30e830" stroke-width="4"/>
          <path d="M225 625 262 632" stroke="#f01010" stroke-width="4"/><path d="m273 634-13-5-1 9z" fill="#f01010"/>
          <path d="M219 572h8l-8 9h8" fill="none" stroke="#0a78f0"/>
          <path d="m243 613 3 4 4-4M246 617v4" fill="none" stroke="#30e830"/>
          <path d="m265 625 8 8m0-8-8 8" stroke="#d01010"/>
        </g>
      </svg>
      <div class="sogou">
        <b class="s-logo">S</b>
        <span class="s-a">A</span><span class="s-p">•,</span>
        <svg class="ic"><use href="#smic"/></svg>
        <svg class="ic"><use href="#skbd"/></svg>
        <span class="s-person"><svg class="ic"><use href="#sperson"/></svg><b>18</b></span>
        <svg class="ic"><use href="#shirt"/></svg>
        <svg class="ic"><use href="#wrench"/></svg>
      </div>
    </div>

    <div class="row bottom">
      <div class="blk b-snap1">
        <i class="grip g4"></i>
        <div class="it"><svg class="ic"><use href="#ortho"/></svg><span>正交</span></div>
        <div class="it tog"><svg class="ic"><use href="#snap"/></svg><span>对象捕捉</span></div>
        <div class="it tog"><svg class="ic" viewBox="0 0 16 16"><path d="M1 1v14M15 1v14M1 4h14" stroke="#a04a30"/><path d="M3 8h10v7H3z" fill="#fff" stroke="#555"/><text class="dyn12" x="4" y="14">12</text></svg><span>动态输入</span></div>
      </div>
      <div class="blk">
        <i class="grip g7"></i>
        <div class="it"><svg class="ic"><use href="#cross"/></svg><span>交点</span></div>
        <div class="it tog"><svg class="ic"><use href="#perp"/></svg><span>垂点</span></div>
        <div class="it tog"><svg class="ic"><use href="#mid"/></svg><span>中点</span></div>
        <div class="it"><svg class="ic"><use href="#penta"/></svg><span>顶点</span></div>
        <div class="it"><svg class="ic"><use href="#coord"/></svg><span>坐标</span></div>
      </div>
      <div class="blk b-off">
        <i class="grip g8"></i>
        <div class="combo c58"><span>不偏移</span><i class="arr"></i></div><i class="sep"></i>
        <span class="unit u1">X=</span>
        <div class="spin s57"><span>0</span><i class="sp"></i></div>
        <span class="unit u2">mm</span><span class="unit u3">Y=</span>
        <div class="spin s57"><span>0</span><i class="sp"></i></div>
        <span class="unit u2">mm</span><i class="sep"></i>
        <i class="check"></i><span class="rotl">旋转</span>
        <div class="spin s68"><span>0.000</span><i class="sp"></i></div>
        <span class="unit u2">°</span>
      </div>
    </div>
  </section>
</main>

<div class="status">
  <span class="c c1">X=232861 Y=12060</span>
  <span class="c c2"><span class="cn">层高</span>:3.47m</span>
  <span class="c c3"><span class="cn">底标高</span>:-3.5m</span>
  <span class="c c4">0</span>
  <span class="c c5"></span>
  <span class="c c6">540.7 FPS</span>
</div>

<footer class="taskbar">
  <div class="tb start"><svg class="ic"><use href="#win"/></svg></div>
  <div class="search"><i class="ring"></i><span>在这里输入你要搜索的内容</span><svg class="ic micr"><use href="#mic"/></svg></div>
  <div class="tb"><svg class="tbi"><use href="#tview"/></svg></div>
  <div class="tb"><svg class="tbi"><use href="#fan"/></svg></div>
  <div class="tb"><svg class="tbi"><use href="#swirl"/></svg></div>
  <div class="tbsep"><i></i></div>
  <div class="tb"><svg class="tbi"><use href="#edge"/></svg></div>
  <div class="tb"><svg class="tbi"><use href="#store"/></svg></div>
  <div class="tb"><svg class="tbi"><use href="#expl"/></svg></div>
  <div class="tb"><svg class="tbi"><use href="#ie"/></svg></div>
  <div class="tb run"><svg class="tbi"><use href="#gapp"/></svg></div>
  <div class="tb run"><svg class="tbi"><use href="#green"/></svg></div>
  <div class="tb run active"><svg class="tbi"><use href="#app"/></svg></div>
  <div class="tray">
    <div class="cpu"><span>46%</span><span>CPU使用</span></div>
    <span class="tr"><i class="caret"></i></span>
    <span class="tr"><svg class="ic"><use href="#plug"/></svg></span>
    <span class="tr"><svg class="ic"><use href="#wifi"/></svg></span>
    <span class="tr"><svg class="ic"><use href="#sound"/></svg></span>
    <span class="tr kb"><svg class="kbic"><use href="#kbd"/></svg></span>
    <span class="tr ta">A</span>
    <span class="tr"><b class="s-logo small">S</b></span>
    <div class="clock"><span>9:34</span><span>2017/10/30</span></div>
    <div class="notify"><svg class="ic"><use href="#msg"/></svg><b>2</b></div>
  </div>
</footer>
</body>
</html>
```

FILE: styles.css
```css
* { box-sizing: border-box; }
html, body { margin: 0; padding: 0; height: 100%; }
body {
  width: 1366px; height: 768px; overflow: hidden; position: relative;
  display: flex; flex-direction: column;
  background: #f0f0f0; color: #222;
  font: 12px/16px "Noto Sans CJK SC", "Liberation Sans", sans-serif;
}
i { font-style: normal; display: block; }
.sprite { position: absolute; width: 0; height: 0; }
.ic { width: 16px; height: 16px; flex: none; display: block; }

.titlebar { height: 23px; background: #fff; display: flex; align-items: center; flex: none; }
.appicon { width: 15px; height: 15px; margin: 0 5px 0 3px; flex: none; }
.title { white-space: nowrap; color: #222; letter-spacing: .36px; }
.winbtns { margin-left: auto; display: flex; margin-right: 2px; }
.wb { width: 46px; height: 23px; display: flex; align-items: center; justify-content: center; }
.w-min { width: 10px; height: 1px; background: #222; }
.w-max { width: 9px; height: 10px; border: 1px solid #222; box-shadow: 2px -2px 0 -1px #fff, 2px -2px 0 0 #222; }
.w-close { font-size: 14px; color: #222; }
.badge {
  position: absolute; left: 1139px; top: -30px; width: 48px; height: 48px; border-radius: 50%;
  background: #38b04a; border: 2px solid #c8d8c8; box-shadow: 0 1px 2px #888;
  color: #fff; font-weight: 700; font-size: 12px; text-align: center; padding-top: 28px;
}

.menubar { height: 29px; display: flex; align-items: center; flex: none; background: linear-gradient(#f3f3f3, #fafafa); }
.menus { display: flex; gap: 10.600px; padding-left: 7px; white-space: nowrap; }
.ml5 { margin-left: 5px; }
.news { margin-left: 3px; width: 187px; height: 27px; padding: 6px 0 0 29px; background: #fafafa; color: #5a3a10; white-space: nowrap; }
.userbox { margin-left: 4px; flex: 1; display: flex; align-items: center; padding-left: 2px; height: 27px; }
.phone { margin-left: 4px; letter-spacing: .35px; }
.beans { margin-left: 10px; }
.bell { margin: 0 0 0 8px; }
.more { font-weight: 700; font-size: 13px; margin-left: auto; margin-top: -6px; padding-right: 4px; color: #222; }
.more.mr { padding-right: 3px; }

.row { display: flex; flex: none; }
.rowtop { height: 27px; margin-top: 2px; margin-bottom: 3px; gap: 1px; }
.blk { display: flex; align-items: center; background: linear-gradient(#fbfbfb, #f5f5f5); border-radius: 3px; }
.b-file { width: 151px; padding-left: 4px; }
.b-calc { width: 550px; padding-left: 2px; }
.b-view { flex: 1; padding-left: 1px; }
.ib { width: 22px; display: flex; justify-content: center; }
.it { display: flex; align-items: center; gap: 3px; padding: 0 4px; height: 25px; white-space: nowrap; flex: none; }
.off { color: #a6a6a6; }
.wh { background: #fff; }
.sigma { width: 16px; text-align: center; font-size: 14px; font-family: "Liberation Serif", serif; }
.act { outline: 1px solid #0078d7; outline-offset: -1px; background: #e5f1fb; }
.tog { border: 1px solid #0078d7; background: #e5f1fb; padding: 0 3px; }
.arr { width: 12px; height: 16px; position: relative; flex: none; }
.arr::after { content: ""; position: absolute; left: 3px; top: 7px; border: 3px solid transparent; border-top: 3px solid #222; border-bottom: 0; }
.a13 { width: 13px; }
.a8 { width: 8px; }
.a8::after { left: 1px; }
.dim::after { border-top-color: #aaa; }
.sep { width: 6px; height: 18px; position: relative; flex: none; }
.sep::after { content: ""; position: absolute; left: 2px; top: 0; bottom: 0; width: 1px; background: #c8c8c8; }
.s7 { width: 7px; }
.gap2 { width: 2px; }
.grip { width: 6px; height: 18px; flex: none; background: radial-gradient(circle at 1.500px 1.500px, #888 1px, transparent 1.200px) 0 0 / 6px 4px repeat-y; }
.g4 { width: 4px; }
.g5 { width: 5px; }
.g7 { width: 7px; }
.g8 { width: 8px; }

.work { flex: 1; display: flex; min-height: 0; }
.nav { width: 170px; flex: none; padding-right: 4px; display: flex; flex-direction: column; }
.navhead { height: 15px; margin-bottom: 2px; background: #0a5ae0; color: #fff; display: flex; align-items: center; line-height: 15px; padding-left: 1px; font-size: 13px; letter-spacing: .2px; }
.pin { margin-left: auto; width: 10px; height: 10px; margin-right: 7px; flex: none; }
.navx { width: 15px; margin-right: 2px; text-align: center; font-size: 10px; }
.navbtn { height: 21px; margin: 0 0 1px 2px; padding: 0; font: inherit; color: #222; background: #f0f0f0; border: 1px solid #a0a0a0; box-shadow: inset 1px 1px 0 #fff; flex: none; }
.navbtn.on { height: 22px; background: #ececec; margin-bottom: 0; box-shadow: inset 0 -1px 0 #777; }
.navbtn.low { font-size: 12px; margin: 0 0 1px 2px; height: 21px; }
.panel { height: 515px; margin-left: 2px; flex: none; border: 1px solid #a0a0a0; border-top: 1px solid #ccc; padding: 0 3px 1px 1px; display: flex; flex-direction: column; margin-bottom: 1px; }
.strip { height: 22px; display: flex; gap: 6px; align-items: center; padding: 4px 0 0 4px; flex: none; }
.wide { width: 18px; }
.treewrap { flex: 1; display: flex; min-height: 0; }
.tree { width: 143px; background: #fff; overflow: hidden; flex: none; }
.group { position: relative; }
.group.first { padding-top: 6px; }
.group::before { content: ""; position: absolute; left: 12px; top: 0; bottom: 0; border-left: 1px dotted #666; }
.node, .leaf { height: 16px; display: flex; align-items: center; white-space: nowrap; position: relative; }
.node { padding-left: 7px; }
.node .cv { width: 10px; height: 10px; flex: none; margin-right: 7px; }
.node .ic { margin-right: 5px; }
.node::before { content: ""; position: absolute; left: 18px; width: 6px; top: 8px; border-top: 1px dotted #777; }
.leaf { padding-left: 43px; gap: 4px; }
.leaf::before { content: ""; position: absolute; left: 31px; top: 0; bottom: 0; border-left: 1px dotted #666; }
.leaf:last-child::before { bottom: 8px; }
.leaf::after { content: ""; position: absolute; left: 32px; width: 10px; top: 8px; border-top: 1px dotted #666; }
.leaf .ic { position: relative; z-index: 1; }
.m { font: 10px/16px "Liberation Mono", monospace; color: #222; }
.sel span { background: #d9d9d9; }
.sel > span { padding-right: 3px; }
.vscroll { width: 15px; background: #f0f0f0; display: flex; flex-direction: column; align-items: center; flex: none; }
.up, .down { width: 9px; height: 9px; flex: none; border: solid #666; border-width: 2px 0 0 2px; transform: scale(.7) rotate(45deg); }
.up { margin-top: 8px; }
.down { margin-top: auto; margin-bottom: 4px; transform: scale(.7) rotate(225deg); }
.vthumb { width: 15px; height: 359px; background: #c8c8c8; margin-top: 43px; flex: none; }
.hscroll { height: 18px; background: #f0f0f0; display: flex; align-items: center; flex: none; padding-left: 8px; }
.hscroll .cv { width: 10px; height: 10px; flex: none; }
.hscroll .cv:first-child { transform: scaleX(-1); }
.hthumb { width: 102px; height: 18px; background: #c8c8c8; margin: 0 9px 0 4px; flex: none; }

.right { flex: 1; min-width: 0; display: flex; flex-direction: column; }
.r2 { height: 27px; margin: 0 0 1px 2px; }
.ra { height: 26px; }
.r4 { margin-bottom: 0; height: 29px; gap: 2px; }
.combo { background: #fff; height: 24px; display: flex; align-items: center; justify-content: space-between; padding-left: 2px; white-space: nowrap; flex: none; margin-right: 2px; }
.c58 { width: 58px; }
.c69 { width: 69px; margin-right: 3px; }
.c68 { width: 68px; margin-right: 4px; }
.c70 { width: 70px; margin-right: 2px; }
.c55 { width: 55px; margin-right: 0; }
.b-axis { margin-left: 76px; padding-right: 1px; }
.b-tail { width: 31px; padding-left: 0; background: linear-gradient(90deg, #f2f2f2 4px, #fff 6px); }

.canvas { flex: 1; min-height: 0; position: relative; background: #000; }
.scene { display: block; width: 1196px; height: 507px; }
.ln path { fill: none; stroke-width: 1; shape-rendering: crispEdges; }
.beam { shape-rendering: crispEdges; }
.guide circle { fill: none; stroke: #b4b4b4; stroke-width: 1; }
.bub circle { fill: none; stroke: #0a7a0a; stroke-width: 1; }
.lbl text { fill: #e4e4e4; font: 400 12px "Liberation Mono", monospace; text-anchor: middle; }
.sogou { position: absolute; left: 838px; top: 393px; width: 185px; height: 24px; display: flex; align-items: center; gap: 6px; padding-left: 34px; }
.sogou::before { content: ""; position: absolute; left: 24px; right: 0; top: 1px; bottom: 0; background: #f2f6fc; border: 1px solid #c8d4e4; }
.sogou > * { position: relative; }
.sogou .ic { width: 16px; height: 16px; }
.s-logo { position: absolute !important; left: 0; top: 0; width: 28px; height: 24px; border-radius: 5px; background: #f0561d; color: #fff; font: 700 22px/24px "Liberation Sans", sans-serif; text-align: center; transform: skewX(-4deg); }
.s-a { font: 700 17px/24px "Liberation Sans", sans-serif; color: #1a6cc4; width: 14px; }
.s-p { color: #1a6cc4; font-weight: 700; width: 16px; text-align: center; }
.s-person { width: 16px; height: 16px; left: 3px; }
.s-person b { position: absolute; left: 7px; top: 9px; font: 700 7px/8px "Liberation Sans", sans-serif; color: #8a96a8; background: #f2f6fc; padding: 0 1px; }

.bottom { height: 32px; padding: 2px 0 3px 4px; gap: 2px; }
.b-off { margin-left: 1px; width: 410px; }
.dyn12 { font: 6px "Liberation Mono", monospace; fill: #222; }
.spin { height: 23px; border: 1px solid #7a7a7a; background: #f4f4f4; display: flex; align-items: center; justify-content: flex-end; color: #888; flex: none; }
.s57 { width: 57px; margin: 0 2px 0 3px; }
.s68 { width: 68px; margin: 0 3px 0 4px; }
.sp { width: 15px; height: 19px; position: relative; margin-left: 5px; }
.sp::before, .sp::after { content: ""; position: absolute; left: 4px; border: 3px solid transparent; }
.sp::before { top: 0; border-bottom: 4px solid #666; border-top: 0; }
.sp::after { bottom: 0; border-top: 4px solid #666; border-bottom: 0; }
.unit { color: #777; flex: none; }
.u1 { margin-left: 1px; width: 16px; }
.u2 { min-width: 22px; }
.u3 { margin-left: 5px; width: 15px; }
.check { width: 11px; height: 11px; border: 1px solid #888; background: #fff; margin-left: 1px; flex: none; }
.rotl { margin-left: 9px; white-space: nowrap; flex: none; }

.status { height: 21px; display: flex; gap: 2px; flex: none; font: 10px/18px "Liberation Mono", monospace; }
.c { background: #fff; border: 1px solid #d8d8d8; padding-left: 1px; white-space: nowrap; height: 20px; flex: none; }
.cn { font: 12px/16px "Noto Sans CJK SC", sans-serif; }
.c1 { width: 148px; }
.c2 { width: 78px; }
.c3 { width: 98px; }
.c4 { width: 48px; }
.c5 { width: 916px; background: #fbfbfb; }
.c6 { flex: 1; padding-left: 0; }

.taskbar { height: 40px; flex: none; background: #0a0f12; display: flex; align-items: center; color: #eee; }
.start { width: 48px !important; }
.tb { width: 48.600px; height: 40px; display: flex; align-items: center; justify-content: center; flex: none; position: relative; }
.search { width: 344px; height: 40px; background: #333; display: flex; align-items: center; padding-left: 10px; color: #9a9a9a; font-size: 14px; flex: none; }
.ring { width: 20px; height: 20px; border: 2px solid #ddd; border-radius: 50%; margin-right: 6px; }
.micr { margin-left: auto; margin-right: 13px; }
.tbi { width: 22px; height: 22px; flex: none; }
.tbsep { width: 27px; flex: none; display: flex; justify-content: center; }
.tbsep i { width: 3px; height: 16px; border-left: 1px solid #444; border-right: 1px solid #444; }
.run::after { content: ""; position: absolute; left: 4px; right: 4px; bottom: 0; height: 2px; background: #76b9ed; }
.active { background: #3a4145; }
.active::after { left: 0; right: 0; }
.tray { margin-left: auto; display: flex; align-items: center; height: 40px; }
.cpu { width: 60px; display: flex; flex-direction: column; align-items: center; line-height: 19px; margin-right: 8px; }
.tr { width: 24px; display: flex; justify-content: center; align-items: center; position: relative; height: 24px; }
.caret { width: 9px; height: 9px; border: solid #eee; border-width: 1px 0 0 1px; transform: rotate(45deg); margin-top: 4px; }
.kb { width: 32px; }
.kbic { width: 24px; height: 16px; }
.ta { font: 700 15px "Liberation Sans", sans-serif; margin-right: 2px; }
.s-logo.small { width: 14px; height: 16px; font-size: 14px; line-height: 16px; border-radius: 2px; left: 5px; top: 4px; }
.clock { width: 80px; margin-left: 3px; display: flex; flex-direction: column; align-items: center; line-height: 19px; }
.notify { width: 50px; position: relative; height: 40px; padding: 10px 0 0 9px; }
.notify b { position: absolute; left: 17px; top: 18px; width: 16px; height: 16px; border-radius: 50%; background: #333; border: 1px solid #aaa; color: #fff; font-size: 11px; line-height: 14px; text-align: center; }
```
